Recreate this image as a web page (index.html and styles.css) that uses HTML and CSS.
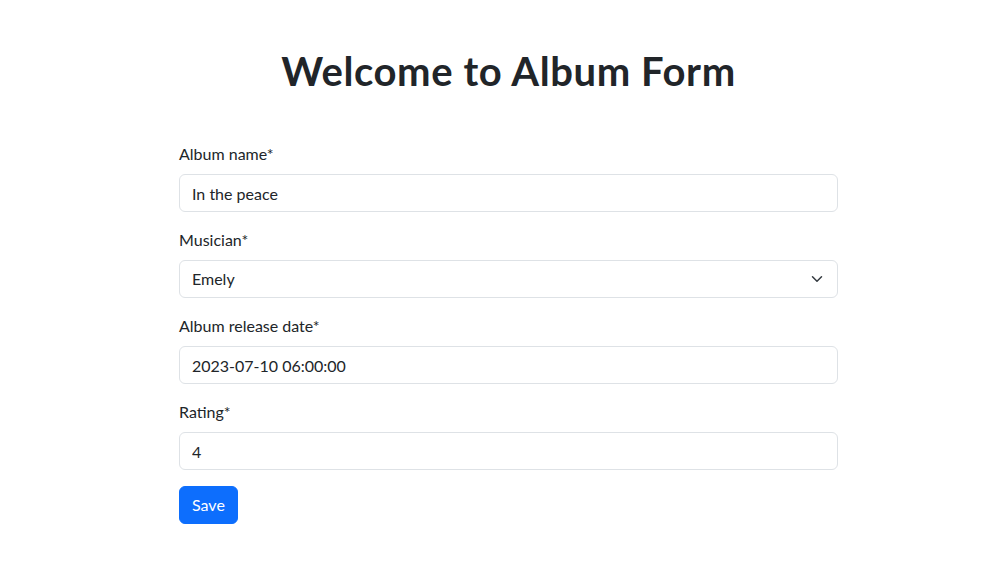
FILE: index.html
```html
<!DOCTYPE html>
<html lang="en">
<head>
<meta charset="utf-8">
<title>Album Form</title>
<link rel="stylesheet" href="styles.css">
</head>
<body>
<main class="page">
  <h1 class="title">Welcome to Album Form</h1>
  <form class="form">
    <div class="field">
      <label class="label" for="name">Album name*</label>
      <input class="control" id="name" type="text" value="In the peace">
    </div>
    <div class="field">
      <label class="label">Musician*</label>
      <div class="control select">
        <span>Emely</span>
        <svg class="chev" width="16" height="12" viewBox="0 0 16 16"><path d="m2 5 6 6 6-6" fill="none" stroke="#343a40" stroke-linecap="round" stroke-linejoin="round" stroke-width="2"/></svg>
      </div>
    </div>
    <div class="field">
      <label class="label" for="date">Album release date*</label>
      <input class="control" id="date" type="text" value="2023-07-10 06:00:00">
    </div>
    <div class="field">
      <label class="label" for="rating">Rating*</label>
      <input class="control" id="rating" type="text" value="4">
    </div>
    <button class="btn" type="button">Save</button>
  </form>
</main>
</body>
</html>
```
FILE: styles.css
```css
* { box-sizing: border-box; }
html, body { margin: 0; padding: 0; background: #fff; }
body {
  font-family: Lato, "Noto Sans", "Liberation Sans", sans-serif;
  font-size: 16px;
  line-height: 1.5;
  color: #212529;
}
.page {
  width: 659px;
  margin-left: 179px;
  padding-top: 47px;
}
.title {
  margin: 0 0 47px;
  font-size: 40px;
  font-weight: 700;
  line-height: 1.2;
  letter-spacing: 0.6px;
  text-align: center;
}
.form { display: flex; flex-direction: column; align-items: flex-start; }
.field { width: 100%; margin-bottom: 16px; }
.label { display: block; margin-bottom: 8px; }
.control {
  display: block;
  width: 100%;
  height: 38px;
  padding: 6px 12px;
  font: inherit;
  color: #212529;
  background: #fff;
  border: 1px solid #dee2e6;
  border-radius: 6px;
  outline: none;
}
.select {
  display: flex;
  align-items: center;
  justify-content: space-between;
  padding-right: 12px;
}
.chev { display: block; }
.btn {
  height: 38px;
  padding: 6px 12px;
  font: inherit;
  color: #fff;
  background: #0d6efd;
  border: 1px solid #0d6efd;
  border-radius: 6px;
}
```
